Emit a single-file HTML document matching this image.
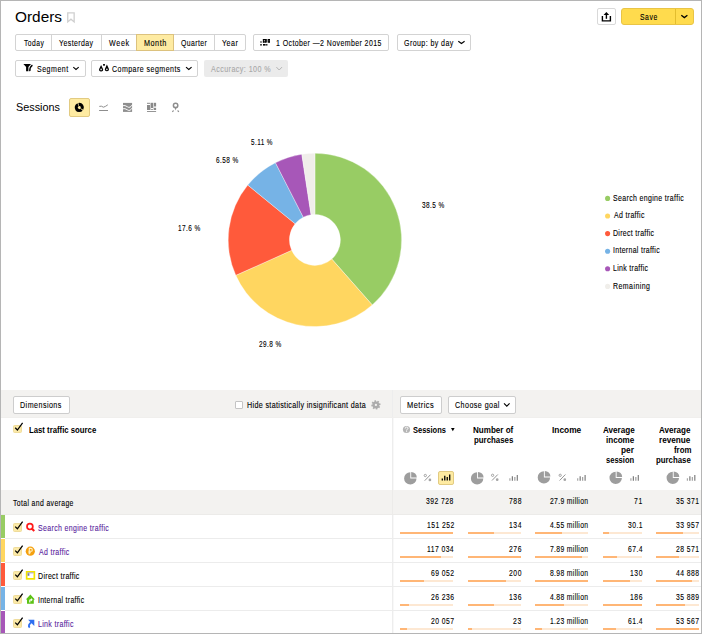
<!DOCTYPE html>
<html><head><meta charset="utf-8"><title>Orders</title><style>
html,body{margin:0;padding:0;background:#fff;width:702px;height:634px;overflow:hidden}
#r{position:relative;width:702px;height:634px;overflow:hidden;background:#fff;font-family:"Liberation Sans",sans-serif;color:#000}
.a{position:absolute}
.t{white-space:nowrap;line-height:1.117;transform-origin:0 0;-webkit-text-stroke:0.12px currentColor}
#ico{position:absolute;left:0;top:0}
#bd{position:absolute;left:0;top:0;width:702px;height:634px;box-sizing:border-box;border:1px solid #b5b5b5;pointer-events:none}
</style></head><body><div id="r">
<div class="a" style="left:597px;top:8px;width:19px;height:17px;border:1px solid #d9d9d9;border-radius:2px;box-sizing:border-box;background:#fff"></div>
<div class="a" style="left:621px;top:8px;width:73px;height:17px;background:#ffdb4d;border:1px solid #e9c446;border-radius:3px;box-sizing:border-box"></div>
<div class="a" style="left:675px;top:9px;width:1px;height:15px;background:#e3bd2e"></div>
<div class="a" style="left:15px;top:34px;width:231px;height:17px;border:1px solid #d3d3d3;border-radius:2px;box-sizing:border-box;background:#fff"></div>
<div class="a" style="left:51px;top:34px;width:1px;height:17px;background:#d3d3d3"></div>
<div class="a" style="left:101px;top:34px;width:1px;height:17px;background:#d3d3d3"></div>
<div class="a" style="left:214px;top:34px;width:1px;height:17px;background:#d3d3d3"></div>
<div class="a" style="left:136px;top:34px;width:38px;height:17px;background:#feeba2;border:1px solid #dcc27e;box-sizing:border-box"></div>
<div class="a" style="left:253px;top:34px;width:136px;height:17px;border:1px solid #d3d3d3;border-radius:2px;box-sizing:border-box;background:#fff"></div>
<div class="a" style="left:397px;top:34px;width:74px;height:17px;border:1px solid #d3d3d3;border-radius:2px;box-sizing:border-box;background:#fff"></div>
<div class="a" style="left:15px;top:60px;width:71px;height:17px;border:1px solid #d3d3d3;border-radius:2px;box-sizing:border-box;background:#fff"></div>
<div class="a" style="left:91px;top:60px;width:107px;height:17px;border:1px solid #d3d3d3;border-radius:2px;box-sizing:border-box;background:#fff"></div>
<div class="a" style="left:204px;top:60px;width:84px;height:17px;background:#ebebeb;border-radius:2px"></div>
<div class="a" style="left:69px;top:98px;width:21px;height:19px;background:#feeba2;border:1px solid #e2cb82;border-radius:2px;box-sizing:border-box"></div>
<div class="a" style="left:1px;top:390px;width:700px;height:28px;background:#f3f2f0"></div>
<div class="a" style="left:392px;top:390px;width:1px;height:244px;background:#ededed"></div>
<div class="a" style="left:393px;top:418px;width:1px;height:72px;background:#f8f8f8"></div>
<div class="a" style="left:393px;top:515px;width:1px;height:119px;background:#f8f8f8"></div>
<div class="a" style="left:1px;top:417px;width:700px;height:1px;background:#f0efed"></div>
<div class="a" style="left:13px;top:396px;width:57px;height:18px;border:1px solid #cdcdcd;border-radius:2px;box-sizing:border-box;background:#fff"></div>
<div class="a" style="left:235px;top:401px;width:8px;height:8px;border:1px solid #c4c4c4;border-radius:1px;box-sizing:border-box;background:#fff"></div>
<div class="a" style="left:400px;top:396px;width:42px;height:18px;border:1px solid #cdcdcd;border-radius:2px;box-sizing:border-box;background:#fff"></div>
<div class="a" style="left:448px;top:396px;width:68px;height:18px;border:1px solid #cdcdcd;border-radius:2px;box-sizing:border-box;background:#fff"></div>
<div class="a" style="left:13.4px;top:424.6px;width:8.2px;height:8.2px;background:#fbe9a7;border:1px solid #efdc9c;border-radius:1.5px;box-sizing:border-box"></div>
<div class="a" style="left:438px;top:470.5px;width:16px;height:14.3px;background:#feeba2;border:1px solid #e2cb82;border-radius:2px;box-sizing:border-box"></div>
<div class="a" style="left:1px;top:490px;width:700px;height:24px;background:#f3f2f0"></div>
<div class="a" style="left:392px;top:490px;width:1px;height:24px;background:#ecebe9"></div>
<div class="a" style="left:1px;top:514px;width:700px;height:1px;background:#ecebe9"></div>
<div class="a" style="left:1px;top:515px;width:4px;height:23px;background:#98cc64"></div>
<div class="a" style="left:5px;top:538px;width:696px;height:1px;background:#ececec"></div>
<div class="a" style="left:13.4px;top:523.4px;width:8.2px;height:8.2px;background:#fbe9a7;border:1px solid #efdc9c;border-radius:1.5px;box-sizing:border-box"></div>
<div class="a" style="left:400px;top:532px;width:53.4px;height:2px;background:#fde8d3"></div>
<div class="a" style="left:400px;top:532px;width:53.4px;height:2px;background:#ffb676"></div>
<div class="a" style="left:467.7px;top:532px;width:53.3px;height:2px;background:#fde8d3"></div>
<div class="a" style="left:467.7px;top:532px;width:25.88px;height:2px;background:#ffb676"></div>
<div class="a" style="left:535px;top:532px;width:53px;height:2px;background:#fde8d3"></div>
<div class="a" style="left:535px;top:532px;width:26.85px;height:2px;background:#ffb676"></div>
<div class="a" style="left:603px;top:532px;width:39px;height:2px;background:#fde8d3"></div>
<div class="a" style="left:603px;top:532px;width:6.31px;height:2px;background:#ffb676"></div>
<div class="a" style="left:656px;top:532px;width:42.6px;height:2px;background:#fde8d3"></div>
<div class="a" style="left:656px;top:532px;width:27.0px;height:2px;background:#ffb676"></div>
<div class="a" style="left:1px;top:539px;width:4px;height:23px;background:#ffd660"></div>
<div class="a" style="left:5px;top:562px;width:696px;height:1px;background:#ececec"></div>
<div class="a" style="left:13.4px;top:547.4px;width:8.2px;height:8.2px;background:#fbe9a7;border:1px solid #efdc9c;border-radius:1.5px;box-sizing:border-box"></div>
<div class="a" style="left:400px;top:556px;width:53.4px;height:2px;background:#fde8d3"></div>
<div class="a" style="left:400px;top:556px;width:41.32px;height:2px;background:#ffb676"></div>
<div class="a" style="left:467.7px;top:556px;width:53.3px;height:2px;background:#fde8d3"></div>
<div class="a" style="left:467.7px;top:556px;width:53.3px;height:2px;background:#ffb676"></div>
<div class="a" style="left:535px;top:556px;width:53px;height:2px;background:#fde8d3"></div>
<div class="a" style="left:535px;top:556px;width:46.57px;height:2px;background:#ffb676"></div>
<div class="a" style="left:603px;top:556px;width:39px;height:2px;background:#fde8d3"></div>
<div class="a" style="left:603px;top:556px;width:14.13px;height:2px;background:#ffb676"></div>
<div class="a" style="left:656px;top:556px;width:42.6px;height:2px;background:#fde8d3"></div>
<div class="a" style="left:656px;top:556px;width:22.72px;height:2px;background:#ffb676"></div>
<div class="a" style="left:1px;top:563px;width:4px;height:23px;background:#ff5a3b"></div>
<div class="a" style="left:5px;top:586px;width:696px;height:1px;background:#ececec"></div>
<div class="a" style="left:13.4px;top:571.4px;width:8.2px;height:8.2px;background:#fbe9a7;border:1px solid #efdc9c;border-radius:1.5px;box-sizing:border-box"></div>
<div class="a" style="left:400px;top:580px;width:53.4px;height:2px;background:#fde8d3"></div>
<div class="a" style="left:400px;top:580px;width:24.38px;height:2px;background:#ffb676"></div>
<div class="a" style="left:467.7px;top:580px;width:53.3px;height:2px;background:#fde8d3"></div>
<div class="a" style="left:467.7px;top:580px;width:38.62px;height:2px;background:#ffb676"></div>
<div class="a" style="left:535px;top:580px;width:53px;height:2px;background:#fde8d3"></div>
<div class="a" style="left:535px;top:580px;width:53.0px;height:2px;background:#ffb676"></div>
<div class="a" style="left:603px;top:580px;width:39px;height:2px;background:#fde8d3"></div>
<div class="a" style="left:603px;top:580px;width:27.26px;height:2px;background:#ffb676"></div>
<div class="a" style="left:656px;top:580px;width:42.6px;height:2px;background:#fde8d3"></div>
<div class="a" style="left:656px;top:580px;width:35.7px;height:2px;background:#ffb676"></div>
<div class="a" style="left:1px;top:587px;width:4px;height:23px;background:#76b3e6"></div>
<div class="a" style="left:5px;top:610px;width:696px;height:1px;background:#ececec"></div>
<div class="a" style="left:13.4px;top:595.4px;width:8.2px;height:8.2px;background:#fbe9a7;border:1px solid #efdc9c;border-radius:1.5px;box-sizing:border-box"></div>
<div class="a" style="left:400px;top:604px;width:53.4px;height:2px;background:#fde8d3"></div>
<div class="a" style="left:400px;top:604px;width:9.26px;height:2px;background:#ffb676"></div>
<div class="a" style="left:467.7px;top:604px;width:53.3px;height:2px;background:#fde8d3"></div>
<div class="a" style="left:467.7px;top:604px;width:26.26px;height:2px;background:#ffb676"></div>
<div class="a" style="left:535px;top:604px;width:53px;height:2px;background:#fde8d3"></div>
<div class="a" style="left:535px;top:604px;width:28.8px;height:2px;background:#ffb676"></div>
<div class="a" style="left:603px;top:604px;width:39px;height:2px;background:#fde8d3"></div>
<div class="a" style="left:603px;top:604px;width:39.0px;height:2px;background:#ffb676"></div>
<div class="a" style="left:656px;top:604px;width:42.6px;height:2px;background:#fde8d3"></div>
<div class="a" style="left:656px;top:604px;width:28.54px;height:2px;background:#ffb676"></div>
<div class="a" style="left:1px;top:611px;width:4px;height:23px;background:#a757b8"></div>
<div class="a" style="left:5px;top:634px;width:696px;height:1px;background:#ececec"></div>
<div class="a" style="left:13.4px;top:619.4px;width:8.2px;height:8.2px;background:#fbe9a7;border:1px solid #efdc9c;border-radius:1.5px;box-sizing:border-box"></div>
<div class="a" style="left:400px;top:628px;width:53.4px;height:2px;background:#fde8d3"></div>
<div class="a" style="left:400px;top:628px;width:7.08px;height:2px;background:#ffb676"></div>
<div class="a" style="left:467.7px;top:628px;width:53.3px;height:2px;background:#fde8d3"></div>
<div class="a" style="left:467.7px;top:628px;width:4.44px;height:2px;background:#ffb676"></div>
<div class="a" style="left:535px;top:628px;width:53px;height:2px;background:#fde8d3"></div>
<div class="a" style="left:535px;top:628px;width:7.26px;height:2px;background:#ffb676"></div>
<div class="a" style="left:603px;top:628px;width:39px;height:2px;background:#fde8d3"></div>
<div class="a" style="left:603px;top:628px;width:12.87px;height:2px;background:#ffb676"></div>
<div class="a" style="left:656px;top:628px;width:42.6px;height:2px;background:#fde8d3"></div>
<div class="a" style="left:656px;top:628px;width:42.6px;height:2px;background:#ffb676"></div>
<svg id="ico" width="702" height="634" viewBox="0 0 702 634">
<path d="M67.75 12.85H74.15V21.9L70.95 19.2L67.75 21.9Z" fill="none" stroke="#cfcfcf" stroke-width="1.3" stroke-linejoin="miter"/>
<path d="M602.4 16V20.9H610.4V16" fill="none" stroke="#000" stroke-width="1.4"/>
<path d="M606.4 18.8V14" stroke="#000" stroke-width="1.4"/><path d="M603.6 14.9L606.4 12L609.2 14.9Z" fill="#000"/>
<path d="M681.3 15.2L684.3499999999999 17.6L687.4 15.2" fill="none" stroke="#000" stroke-width="1.25"/>
<rect x="262.9" y="39" width="3" height="1.3" fill="#000"/><rect x="262.9" y="41.3" width="3" height="1.3" fill="#000"/><rect x="262.9" y="39" width="1" height="3.6" fill="#000"/><rect x="264.9" y="39" width="1" height="3.6" fill="#000"/><rect x="266.2" y="39" width="1.2" height="3.6" fill="#000"/><rect x="268.1" y="39" width="1.9" height="1.3" fill="#000"/><rect x="268.1" y="41.3" width="1.9" height="1.3" fill="#000"/><rect x="268.1" y="39" width="0.8" height="3.6" fill="#000"/><rect x="269.2" y="39" width="0.8" height="3.6" fill="#000"/><rect x="260.3" y="41.4" width="1.4" height="1.2" fill="#000"/><rect x="260.3" y="44" width="1.4" height="1.6" fill="#000"/><rect x="263" y="44" width="2.6" height="1.6" fill="#000"/><rect x="266.2" y="44" width="1.2" height="1.6" fill="#000"/>
<path d="M458.3 41.2L461.45000000000005 43.5L464.6 41.2" fill="none" stroke="#000" stroke-width="1.1"/>
<path d="M23.4 64H31L28.4 67V71.2H26.1V67Z" fill="#000"/><path d="M32.4 65.2Q29.6 67 29.8 71.1" fill="none" stroke="#000" stroke-width="1.4"/>
<path d="M73.3 67.2L76.0 69.5L78.7 67.2" fill="none" stroke="#000" stroke-width="1.1"/>
<path d="M101.1 65.1L103.03999999999999 68.9A2.0 2.0 0 1 1 99.16 68.9Z M101.85 69.4A0.75 0.85 0 1 0 100.35 69.4A0.75 0.85 0 1 0 101.85 69.4Z" fill="#000" fill-rule="evenodd"/><path d="M106.9 64.6L108.84 68.8A2.0 2.0 0 1 1 104.96000000000001 68.8Z M107.65 69.3A0.75 0.85 0 1 0 106.15 69.3A0.75 0.85 0 1 0 107.65 69.3Z" fill="#000" fill-rule="evenodd"/><rect x="103.1" y="64" width="1.8" height="1.7" fill="#000"/>
<path d="M186.0 67.1L188.8 69.5L191.6 67.1" fill="none" stroke="#000" stroke-width="1.1"/>
<path d="M276.4 67.1L279.2 70.0L282.0 67.1" fill="none" stroke="#b3b3b3" stroke-width="1.0"/>
<path d="M78.344 103.001A4.6 4.6 0 0 1 83.284 109.800L80.599 108.250A1.5 1.5 0 0 0 78.988 106.033Z" fill="#000" /><path d="M82.609 110.695A4.6 4.6 0 1 1 77.429 103.298L78.690 106.130A1.5 1.5 0 1 0 80.379 108.542Z" fill="#000" />
<path d="M99.3 106.4Q101.5 105.6 103.4 107.2Q105.5 106.6 107.8 104.8" fill="none" stroke="#8e8e8e" stroke-width="1"/><path d="M99.1 110.5H108" stroke="#8e8e8e" stroke-width="1"/>
<path d="M123 102.9H132.1V111.9H123Z" fill="#8e8e8e"/><path d="M122.5 105.7Q125 104.9 127.5 106.8T132.6 104.4M122.5 108.8Q125 108 127.5 109.9T132.6 107.5" fill="none" stroke="#fff" stroke-width="0.95"/>
<rect x="147" y="102.8" width="3" height="1" fill="#8a8a8a"/><rect x="147" y="105" width="3" height="5" fill="#8a8a8a"/><rect x="151" y="102.8" width="2" height="5.2" fill="#8a8a8a"/><rect x="151" y="109.2" width="2" height="0.8" fill="#8a8a8a"/><rect x="154" y="102.8" width="2.1" height="3.7" fill="#8a8a8a"/><rect x="154" y="107.8" width="2.1" height="2.2" fill="#8a8a8a"/><rect x="150" y="102.8" width="1" height="7.2" fill="#c9c9c9"/><rect x="153" y="102.8" width="1" height="7.2" fill="#d6d6d6"/><rect x="147" y="111" width="9.1" height="0.9" fill="#8a8a8a"/>
<circle cx="175.6" cy="105.4" r="2.2" fill="none" stroke="#8e8e8e" stroke-width="1.5"/><path d="M174.5 107.3L175.6 110.5L176.7 107.3Z" fill="#8e8e8e"/><path d="M172.3 111.8L173.6 110.5M178.9 111.8L177.6 110.5" stroke="#8e8e8e" stroke-width="1.1"/>
<path d="M314.900 153.200A86.7 86.7 0 0 1 372.236 304.935L331.763 259.028A25.5 25.5 0 0 0 314.900 214.400Z" fill="#98cc64" stroke="#fff" stroke-width="0.35" stroke-linejoin="round"/><path d="M372.236 304.935A86.7 86.7 0 0 1 235.770 275.330L291.626 250.321A25.5 25.5 0 0 0 331.763 259.028Z" fill="#ffd660" stroke="#fff" stroke-width="0.35" stroke-linejoin="round"/><path d="M235.770 275.330A86.7 86.7 0 0 1 247.751 185.056L295.150 223.769A25.5 25.5 0 0 0 291.626 250.321Z" fill="#ff5a3b" stroke="#fff" stroke-width="0.35" stroke-linejoin="round"/><path d="M247.751 185.056A86.7 86.7 0 0 1 275.442 162.699L303.295 217.194A25.5 25.5 0 0 0 295.150 223.769Z" fill="#76b3e6" stroke="#fff" stroke-width="0.35" stroke-linejoin="round"/><path d="M275.442 162.699A86.7 86.7 0 0 1 301.822 154.192L311.053 214.692A25.5 25.5 0 0 0 303.295 217.194Z" fill="#a757b8" stroke="#fff" stroke-width="0.35" stroke-linejoin="round"/><path d="M301.822 154.192A86.7 86.7 0 0 1 314.900 153.200L314.900 214.400A25.5 25.5 0 0 0 311.053 214.692Z" fill="#f0eeea" stroke="#fff" stroke-width="0.35" stroke-linejoin="round"/>
<circle cx="607.6" cy="198.40" r="2.55" fill="#98cc64"/>
<circle cx="607.6" cy="216.00" r="2.55" fill="#ffd660"/>
<circle cx="607.6" cy="233.60" r="2.55" fill="#ff5a3b"/>
<circle cx="607.6" cy="251.20" r="2.55" fill="#76b3e6"/>
<circle cx="607.6" cy="268.80" r="2.55" fill="#a757b8"/>
<circle cx="607.6" cy="286.40" r="2.55" fill="#f0eeea"/>
<circle cx="375.9" cy="404.9" r="3.4" fill="#acacac"/><path d="M375.41 402.14L375.10 400.37" stroke="#acacac" stroke-width="1.7"/><path d="M377.51 402.61L378.54 401.13" stroke="#acacac" stroke-width="1.7"/><path d="M378.66 404.41L380.43 404.10" stroke="#acacac" stroke-width="1.7"/><path d="M378.19 406.51L379.67 407.54" stroke="#acacac" stroke-width="1.7"/><path d="M376.39 407.66L376.70 409.43" stroke="#acacac" stroke-width="1.7"/><path d="M374.29 407.19L373.26 408.67" stroke="#acacac" stroke-width="1.7"/><path d="M373.14 405.39L371.37 405.70" stroke="#acacac" stroke-width="1.7"/><path d="M373.61 403.29L372.13 402.26" stroke="#acacac" stroke-width="1.7"/><circle cx="375.9" cy="404.9" r="1.15" fill="#f3f2f0"/>
<path d="M504.0 403.3L506.8 406.2L509.6 403.3" fill="none" stroke="#000" stroke-width="1.1"/>
<path d="M15.200000000000001 427.8L17.4 430.0L22.6 422.8" fill="none" stroke="#000" stroke-width="1.25"/>
<circle cx="406.5" cy="429.5" r="3.6" fill="#b5b5b5"/><path d="M405.2 428.6Q405.2 427.1 406.6 427.1Q408 427.1 408 428.3Q408 429.2 406.6 429.8V430.6" fill="none" stroke="#fff" stroke-width="0.9"/><rect x="406.1" y="431.2" width="1" height="0.9" fill="#fff"/>
<path d="M451.0 427.9H454.6L452.8 431.2Z" fill="#000"/>
<path d="M416.500 478.400A6.2 6.2 0 1 1 410.300 472.200L410.3 478.40000000000003Z" fill="#9d9d9d" /><path d="M411.200 471.900A5.6 5.6 0 0 1 416.800 477.500L411.2 477.50000000000006Z" fill="#9d9d9d" />
<path d="M424.70000000000005 480.7L430.5 474.7" stroke="#959595" stroke-width="1"/><circle cx="425.3" cy="475.5" r="1.15" fill="none" stroke="#9a9a9a" stroke-width="0.9"/><circle cx="429.90000000000003" cy="479.9" r="1.35" fill="#a5a5a5"/>
<path d="M442.30 480.6V478.4" stroke="#000" stroke-width="1.3"/><path d="M444.77 480.6V475.8" stroke="#000" stroke-width="1.3"/><path d="M447.24 480.6V477.1" stroke="#000" stroke-width="1.3"/><path d="M449.71 480.6V474.5" stroke="#000" stroke-width="1.3"/>
<path d="M483.300 478.400A6.2 6.2 0 1 1 477.100 472.200L477.1 478.40000000000003Z" fill="#9d9d9d" /><path d="M478.000 471.900A5.6 5.6 0 0 1 483.600 477.500L478.0 477.50000000000006Z" fill="#9d9d9d" />
<path d="M492.0 480.5L497.79999999999995 474.5" stroke="#959595" stroke-width="1"/><circle cx="492.59999999999997" cy="475.3" r="1.15" fill="none" stroke="#9a9a9a" stroke-width="0.9"/><circle cx="497.2" cy="479.7" r="1.35" fill="#a5a5a5"/>
<path d="M509.90 480.8V478.3" stroke="#a8a8a8" stroke-width="1.2"/><path d="M512.37 480.8V476.3" stroke="#7a7a7a" stroke-width="1.2"/><path d="M514.84 480.8V477.1" stroke="#a0a0a0" stroke-width="1.2"/><path d="M517.31 480.8V475.1" stroke="#7f7f7f" stroke-width="1.2"/>
<path d="M550.100 477.400A6.2 6.2 0 1 1 543.900 471.200L543.9 477.40000000000003Z" fill="#9d9d9d" /><path d="M544.800 470.900A5.6 5.6 0 0 1 550.400 476.500L544.8 476.50000000000006Z" fill="#9d9d9d" />
<path d="M559.6 480.5L565.4 474.5" stroke="#959595" stroke-width="1"/><circle cx="560.2" cy="475.3" r="1.15" fill="none" stroke="#9a9a9a" stroke-width="0.9"/><circle cx="564.8" cy="479.7" r="1.35" fill="#a5a5a5"/>
<path d="M577.70 480.8V478.3" stroke="#a8a8a8" stroke-width="1.2"/><path d="M580.17 480.8V476.3" stroke="#7a7a7a" stroke-width="1.2"/><path d="M582.64 480.8V477.1" stroke="#a0a0a0" stroke-width="1.2"/><path d="M585.11 480.8V475.1" stroke="#7f7f7f" stroke-width="1.2"/>
<path d="M621.900 477.900A6.2 6.2 0 1 1 615.700 471.700L615.6999999999999 477.90000000000003Z" fill="#9d9d9d" /><path d="M616.600 471.400A5.6 5.6 0 0 1 622.200 477.000L616.5999999999999 477.00000000000006Z" fill="#9d9d9d" />
<path d="M630.90 480.8V478.3" stroke="#a8a8a8" stroke-width="1.2"/><path d="M633.37 480.8V476.3" stroke="#7a7a7a" stroke-width="1.2"/><path d="M635.84 480.8V477.1" stroke="#a0a0a0" stroke-width="1.2"/><path d="M638.31 480.8V475.1" stroke="#7f7f7f" stroke-width="1.2"/>
<path d="M679.000 477.900A6.2 6.2 0 1 1 672.800 471.700L672.8 477.90000000000003Z" fill="#9d9d9d" /><path d="M673.700 471.400A5.6 5.6 0 0 1 679.300 477.000L673.6999999999999 477.00000000000006Z" fill="#9d9d9d" />
<path d="M687.40 480.8V478.3" stroke="#a8a8a8" stroke-width="1.2"/><path d="M689.87 480.8V476.3" stroke="#7a7a7a" stroke-width="1.2"/><path d="M692.34 480.8V477.1" stroke="#a0a0a0" stroke-width="1.2"/><path d="M694.81 480.8V475.1" stroke="#7f7f7f" stroke-width="1.2"/>
<path d="M15.200000000000001 526.6L17.4 528.8L22.6 521.6" fill="none" stroke="#000" stroke-width="1.25"/>
<path d="M15.200000000000001 550.6L17.4 552.8L22.6 545.6" fill="none" stroke="#000" stroke-width="1.25"/>
<path d="M15.200000000000001 574.6L17.4 576.8L22.6 569.6" fill="none" stroke="#000" stroke-width="1.25"/>
<path d="M15.200000000000001 598.6L17.4 600.8L22.6 593.6" fill="none" stroke="#000" stroke-width="1.25"/>
<path d="M15.200000000000001 622.6L17.4 624.8L22.6 617.6" fill="none" stroke="#000" stroke-width="1.25"/>
<circle cx="29.9" cy="526.6" r="2.9" fill="none" stroke="#ff1a1a" stroke-width="1.7"/><path d="M31.9 528.7L34.3 530.9" stroke="#ff1a1a" stroke-width="2.1"/>
<circle cx="30.3" cy="551.2" r="4.6" fill="#f5a00f"/><path d="M29.3 554.3V548.4H30.9Q32.3 548.4 32.3 549.9Q32.3 551.3 30.9 551.3H28.4M28.4 552.8H30.9" fill="none" stroke="#fff3c8" stroke-width="1.1"/>
<rect x="26.65" y="571.85" width="7.7" height="7.0" fill="#fff" stroke="#f2e400" stroke-width="1.7"/><path d="M27.5 572.9H33.5" stroke="#8f8ff0" stroke-width="0.8"/><rect x="27.6" y="573.3" width="1.8" height="2.5" fill="#7a7aa0"/>
<path d="M30.4 594.5L34.9 599.6H33.8V603.8H27V599.6H25.8Z" fill="#5cc214"/><path d="M29.2 602.6V600.5Q29.2 599.2 30.6 599.2H31.1V598.1L32.7 599.8L31.1 601.4V600.4H30.7Q30.4 600.4 30.4 600.8V602.6Z" fill="#fff"/>
<path d="M28.1 619.7H34.3V625.9Z" fill="#2f6ff0"/><path d="M29.7 627.7Q27.2 624.9 32.2 621.8" fill="none" stroke="#2f6ff0" stroke-width="1.9"/>
</svg>
<div class="a t" style="left:15.07px;top:8.00px;font-size:15.5px;color:#000;-webkit-text-stroke:0;transform:scaleX(0.9919);">Orders</div>
<div class="a t" style="left:639.99px;top:12.00px;font-size:9.4px;color:#000;letter-spacing:0.762px;transform:scaleX(0.7301);">Save</div>
<div class="a t" style="left:23.55px;top:38.00px;font-size:9.4px;color:#000;letter-spacing:0.690px;transform:scaleX(0.7174);">Today</div>
<div class="a t" style="left:59.04px;top:38.00px;font-size:9.4px;color:#000;letter-spacing:0.572px;transform:scaleX(0.7424);">Yesterday</div>
<div class="a t" style="left:109.06px;top:38.00px;font-size:9.4px;color:#000;letter-spacing:0.882px;transform:scaleX(0.7599);">Week</div>
<div class="a t" style="left:144.20px;top:38.00px;font-size:9.4px;color:#000;letter-spacing:0.687px;transform:scaleX(0.7710);">Month</div>
<div class="a t" style="left:180.87px;top:38.00px;font-size:9.4px;color:#000;letter-spacing:0.579px;transform:scaleX(0.7337);">Quarter</div>
<div class="a t" style="left:222.04px;top:38.00px;font-size:9.4px;color:#000;letter-spacing:0.690px;transform:scaleX(0.7582);">Year</div>
<div class="a t" style="left:275.68px;top:38.00px;font-size:9.4px;color:#000;letter-spacing:0.564px;transform:scaleX(0.7431);">1 October —2 November 2015</div>
<div class="a t" style="left:404.35px;top:38.00px;font-size:9.4px;color:#000;letter-spacing:0.542px;transform:scaleX(0.7530);">Group: by day</div>
<div class="a t" style="left:36.98px;top:64.00px;font-size:9.4px;color:#000;letter-spacing:0.688px;transform:scaleX(0.7490);">Segment</div>
<div class="a t" style="left:112.45px;top:64.00px;font-size:9.4px;color:#000;letter-spacing:0.602px;transform:scaleX(0.7522);">Compare segments</div>
<div class="a t" style="left:211.48px;top:64.00px;font-size:9.4px;color:#a9a9a9;letter-spacing:0.557px;transform:scaleX(0.7629);">Accuracy: 100 %</div>
<div class="a t" style="left:15.51px;top:102.00px;font-size:10.6px;color:#000;-webkit-text-stroke:0;transform:scaleX(1.0223);">Sessions</div>
<div class="a t" style="left:250.95px;top:138.00px;font-size:8.8px;color:#000;letter-spacing:0.580px;transform:scaleX(0.7244);">5.11 %</div>
<div class="a t" style="left:215.88px;top:156.00px;font-size:8.8px;color:#000;letter-spacing:0.593px;transform:scaleX(0.7358);">6.58 %</div>
<div class="a t" style="left:178.01px;top:224.00px;font-size:8.8px;color:#000;letter-spacing:0.588px;transform:scaleX(0.7351);">17.6 %</div>
<div class="a t" style="left:421.86px;top:201.00px;font-size:8.8px;color:#000;letter-spacing:0.595px;transform:scaleX(0.7362);">38.5 %</div>
<div class="a t" style="left:259.28px;top:340.00px;font-size:8.8px;color:#000;letter-spacing:0.593px;transform:scaleX(0.7324);">29.8 %</div>
<div class="a t" style="left:613.39px;top:193.00px;font-size:9.4px;color:#000;letter-spacing:0.474px;transform:scaleX(0.7432);">Search engine traffic</div>
<div class="a t" style="left:613.68px;top:210.00px;font-size:9.4px;color:#000;letter-spacing:0.452px;transform:scaleX(0.7432);">Ad traffic</div>
<div class="a t" style="left:613.12px;top:228.00px;font-size:9.4px;color:#000;letter-spacing:0.418px;transform:scaleX(0.7432);">Direct traffic</div>
<div class="a t" style="left:613.05px;top:245.00px;font-size:9.4px;color:#000;letter-spacing:0.412px;transform:scaleX(0.7432);">Internal traffic</div>
<div class="a t" style="left:613.12px;top:263.00px;font-size:9.4px;color:#000;letter-spacing:0.421px;transform:scaleX(0.7432);">Link traffic</div>
<div class="a t" style="left:613.12px;top:281.00px;font-size:9.4px;color:#000;letter-spacing:0.605px;transform:scaleX(0.7432);">Remaining</div>
<div class="a t" style="left:20.31px;top:400.00px;font-size:9.4px;color:#000;letter-spacing:0.593px;transform:scaleX(0.7611);">Dimensions</div>
<div class="a t" style="left:247.01px;top:400.00px;font-size:9.4px;color:#000;letter-spacing:0.430px;transform:scaleX(0.7652);">Hide statistically insignificant data</div>
<div class="a t" style="left:407.38px;top:400.00px;font-size:9.4px;color:#000;letter-spacing:0.540px;transform:scaleX(0.7956);">Metrics</div>
<div class="a t" style="left:455.14px;top:400.00px;font-size:9.4px;color:#000;letter-spacing:0.574px;transform:scaleX(0.7611);">Choose goal</div>
<div class="a t" style="left:29.18px;top:425.00px;font-size:9.4px;color:#000;font-weight:bold;-webkit-text-stroke:0;transform:scaleX(0.8270);">Last traffic source</div>
<div class="a t" style="left:413.47px;top:425.00px;font-size:9.4px;color:#000;font-weight:bold;-webkit-text-stroke:0;transform:scaleX(0.8003);">Sessions</div>
<div class="a t" style="left:473.20px;top:425.00px;font-size:9.4px;color:#000;font-weight:bold;-webkit-text-stroke:0;transform:scaleX(0.8590);">Number of</div>
<div class="a t" style="left:474.49px;top:435.00px;font-size:9.4px;color:#000;font-weight:bold;-webkit-text-stroke:0;transform:scaleX(0.8385);">purchases</div>
<div class="a t" style="left:551.83px;top:425.00px;font-size:9.4px;color:#000;font-weight:bold;-webkit-text-stroke:0;transform:scaleX(0.8917);">Income</div>
<div class="a t" style="left:602.60px;top:425.00px;font-size:9.4px;color:#000;font-weight:bold;-webkit-text-stroke:0;transform:scaleX(0.8676);">Average</div>
<div class="a t" style="left:606.13px;top:435.00px;font-size:9.4px;color:#000;font-weight:bold;-webkit-text-stroke:0;transform:scaleX(0.8611);">income</div>
<div class="a t" style="left:621.36px;top:445.00px;font-size:9.4px;color:#000;font-weight:bold;-webkit-text-stroke:0;transform:scaleX(0.8856);">per</div>
<div class="a t" style="left:606.43px;top:455.00px;font-size:9.4px;color:#000;font-weight:bold;-webkit-text-stroke:0;transform:scaleX(0.8065);">session</div>
<div class="a t" style="left:659.40px;top:425.00px;font-size:9.4px;color:#000;font-weight:bold;-webkit-text-stroke:0;transform:scaleX(0.8594);">Average</div>
<div class="a t" style="left:659.47px;top:435.00px;font-size:9.4px;color:#000;font-weight:bold;-webkit-text-stroke:0;transform:scaleX(0.8738);">revenue</div>
<div class="a t" style="left:673.66px;top:445.00px;font-size:9.4px;color:#000;font-weight:bold;-webkit-text-stroke:0;transform:scaleX(0.8391);">from</div>
<div class="a t" style="left:656.09px;top:455.00px;font-size:9.4px;color:#000;font-weight:bold;-webkit-text-stroke:0;transform:scaleX(0.8344);">purchase</div>
<div class="a t" style="left:12.85px;top:498.00px;font-size:9.4px;color:#000;letter-spacing:0.515px;transform:scaleX(0.7298);">Total and average</div>
<div class="a t" style="left:426.04px;top:496.00px;font-size:9.4px;color:#000;letter-spacing:0.615px;transform:scaleX(0.7237);">392 728</div>
<div class="a t" style="left:508.76px;top:496.00px;font-size:9.4px;color:#000;letter-spacing:0.822px;transform:scaleX(0.7237);">788</div>
<div class="a t" style="left:550.28px;top:496.00px;font-size:9.4px;color:#000;letter-spacing:0.470px;transform:scaleX(0.7237);">27.9 million</div>
<div class="a t" style="left:634.01px;top:496.00px;font-size:9.4px;color:#000;letter-spacing:1.058px;transform:scaleX(0.7237);">71</div>
<div class="a t" style="left:675.88px;top:496.00px;font-size:9.4px;color:#000;letter-spacing:0.621px;transform:scaleX(0.7237);">35 371</div>
<div class="a t" style="left:38.39px;top:523.00px;font-size:9.4px;color:#5a1f9e;letter-spacing:0.474px;transform:scaleX(0.7432);">Search engine traffic</div>
<div class="a t" style="left:426.53px;top:520.00px;font-size:9.4px;color:#000;letter-spacing:0.607px;transform:scaleX(0.7237);">151 252</div>
<div class="a t" style="left:508.66px;top:520.00px;font-size:9.4px;color:#000;letter-spacing:0.817px;transform:scaleX(0.7237);">134</div>
<div class="a t" style="left:550.26px;top:520.00px;font-size:9.4px;color:#000;letter-spacing:0.472px;transform:scaleX(0.7237);">4.55 million</div>
<div class="a t" style="left:627.69px;top:520.00px;font-size:9.4px;color:#000;letter-spacing:0.648px;transform:scaleX(0.7237);">30.1</div>
<div class="a t" style="left:675.90px;top:520.00px;font-size:9.4px;color:#000;letter-spacing:0.620px;transform:scaleX(0.7237);">33 957</div>
<div class="a t" style="left:38.68px;top:547.00px;font-size:9.4px;color:#5a1f9e;letter-spacing:0.452px;transform:scaleX(0.7419);">Ad traffic</div>
<div class="a t" style="left:426.91px;top:544.00px;font-size:9.4px;color:#000;letter-spacing:0.598px;transform:scaleX(0.7237);">117 034</div>
<div class="a t" style="left:508.76px;top:544.00px;font-size:9.4px;color:#000;letter-spacing:0.822px;transform:scaleX(0.7237);">276</div>
<div class="a t" style="left:550.28px;top:544.00px;font-size:9.4px;color:#000;letter-spacing:0.470px;transform:scaleX(0.7237);">7.89 million</div>
<div class="a t" style="left:627.54px;top:544.00px;font-size:9.4px;color:#000;letter-spacing:0.650px;transform:scaleX(0.7237);">67.4</div>
<div class="a t" style="left:675.89px;top:544.00px;font-size:9.4px;color:#000;letter-spacing:0.618px;transform:scaleX(0.7237);">28 571</div>
<div class="a t" style="left:38.12px;top:571.00px;font-size:9.4px;color:#000;letter-spacing:0.418px;transform:scaleX(0.7487);">Direct traffic</div>
<div class="a t" style="left:430.71px;top:568.00px;font-size:9.4px;color:#000;letter-spacing:0.618px;transform:scaleX(0.7237);">69 052</div>
<div class="a t" style="left:508.72px;top:568.00px;font-size:9.4px;color:#000;letter-spacing:0.825px;transform:scaleX(0.7237);">200</div>
<div class="a t" style="left:550.28px;top:568.00px;font-size:9.4px;color:#000;letter-spacing:0.470px;transform:scaleX(0.7237);">8.98 million</div>
<div class="a t" style="left:629.74px;top:568.00px;font-size:9.4px;color:#000;letter-spacing:0.812px;transform:scaleX(0.7237);">130</div>
<div class="a t" style="left:675.83px;top:568.00px;font-size:9.4px;color:#000;letter-spacing:0.625px;transform:scaleX(0.7237);">44 888</div>
<div class="a t" style="left:38.06px;top:595.00px;font-size:9.4px;color:#000;letter-spacing:0.412px;transform:scaleX(0.7343);">Internal traffic</div>
<div class="a t" style="left:430.65px;top:592.00px;font-size:9.4px;color:#000;letter-spacing:0.619px;transform:scaleX(0.7237);">26 236</div>
<div class="a t" style="left:508.77px;top:592.00px;font-size:9.4px;color:#000;letter-spacing:0.809px;transform:scaleX(0.7237);">136</div>
<div class="a t" style="left:550.26px;top:592.00px;font-size:9.4px;color:#000;letter-spacing:0.472px;transform:scaleX(0.7237);">4.88 million</div>
<div class="a t" style="left:629.77px;top:592.00px;font-size:9.4px;color:#000;letter-spacing:0.809px;transform:scaleX(0.7237);">186</div>
<div class="a t" style="left:675.86px;top:592.00px;font-size:9.4px;color:#000;letter-spacing:0.621px;transform:scaleX(0.7237);">35 889</div>
<div class="a t" style="left:38.12px;top:619.00px;font-size:9.4px;color:#5a1f9e;letter-spacing:0.421px;transform:scaleX(0.7521);">Link traffic</div>
<div class="a t" style="left:430.71px;top:616.00px;font-size:9.4px;color:#000;letter-spacing:0.618px;transform:scaleX(0.7237);">20 057</div>
<div class="a t" style="left:512.97px;top:616.00px;font-size:9.4px;color:#000;letter-spacing:1.063px;transform:scaleX(0.7237);">23</div>
<div class="a t" style="left:550.30px;top:616.00px;font-size:9.4px;color:#000;letter-spacing:0.467px;transform:scaleX(0.7237);">1.23 million</div>
<div class="a t" style="left:627.54px;top:616.00px;font-size:9.4px;color:#000;letter-spacing:0.650px;transform:scaleX(0.7237);">61.4</div>
<div class="a t" style="left:675.90px;top:616.00px;font-size:9.4px;color:#000;letter-spacing:0.620px;transform:scaleX(0.7237);">53 567</div>
<div id="bd"></div>
</div></body></html>
